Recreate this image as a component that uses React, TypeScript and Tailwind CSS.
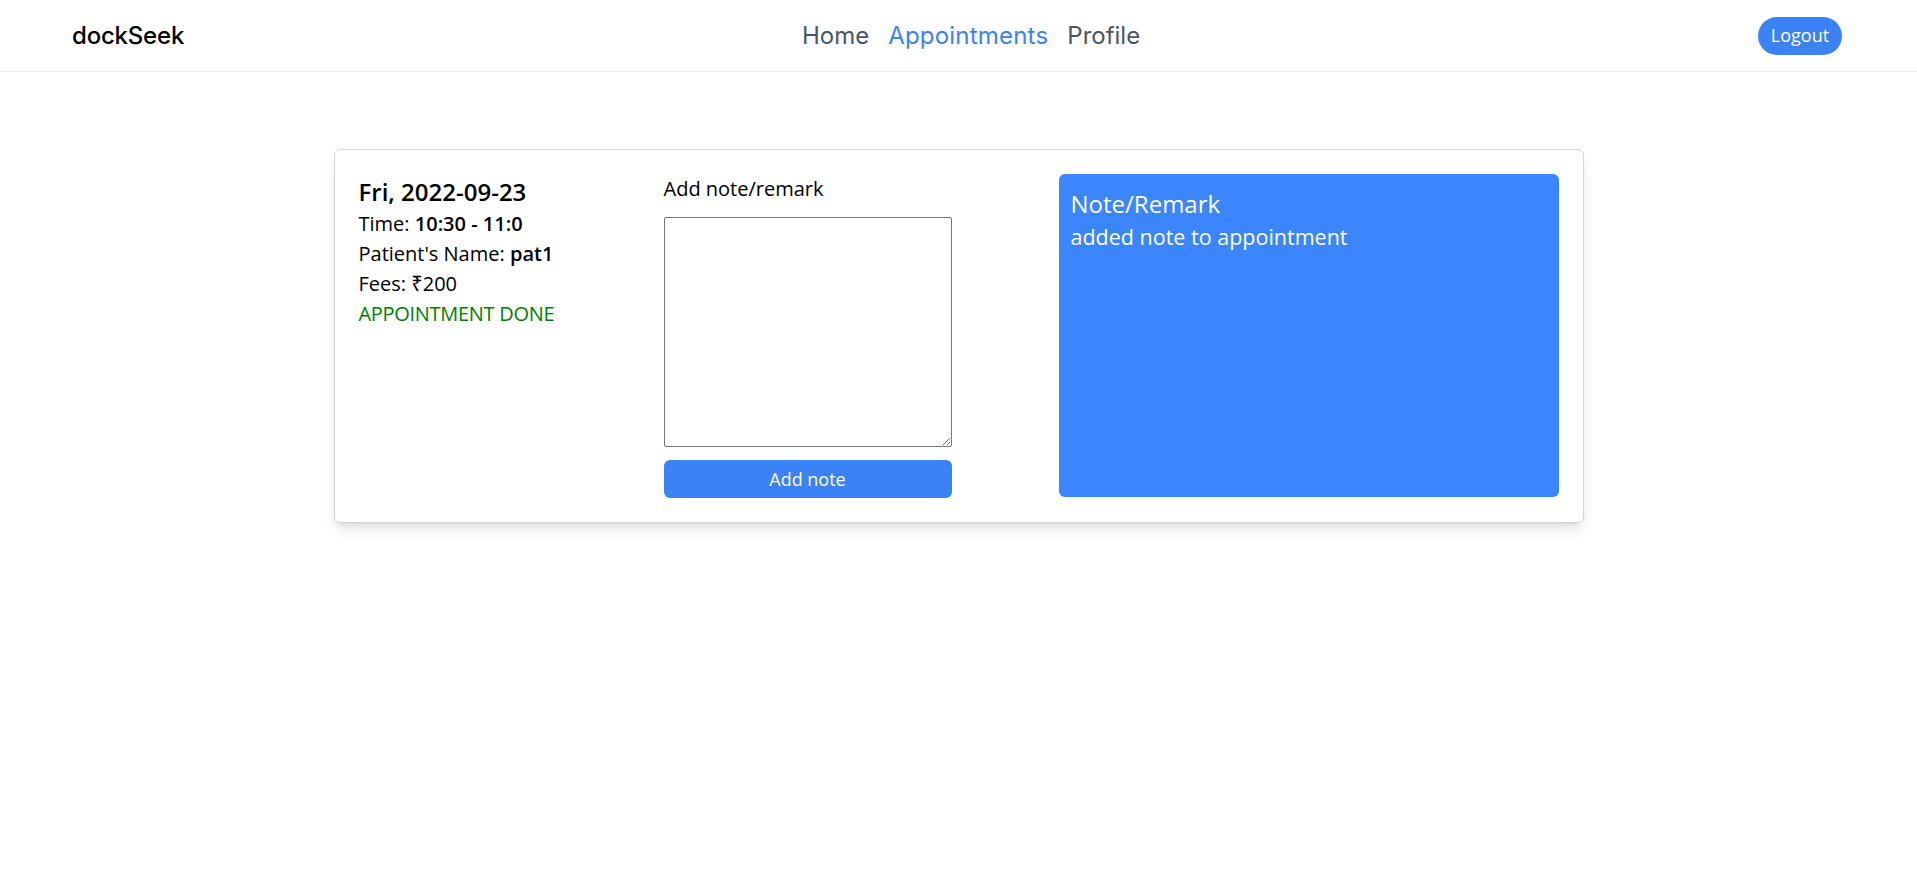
import { useState } from "react";

const Navbar: React.FC = () => {
  return (
    <div className="h-[72px] border-b border-[#ececec] bg-white flex items-center justify-between pl-[72px] pr-[75px]">
      <div className="text-[24px] font-medium text-black font-['Inter',sans-serif] tracking-[-0.2px]">
        dockSeek
      </div>
      <div className="flex items-center gap-[19px] text-[24px] font-['Inter',sans-serif] text-[#4b5563]">
        <span className="cursor-pointer">Home</span>
        <span className="cursor-pointer text-[#3b82f6] tracking-[0.2px]">Appointments</span>
        <span className="cursor-pointer">Profile</span>
      </div>
      <button className="w-[84px] h-[38px] rounded-full bg-[#3b82f6] text-white text-[18px] flex items-center justify-center">
        Logout
      </button>
    </div>
  );
};

const AppointmentCard: React.FC = () => {
  const [note, setNote] = useState("");

  return (
    <div className="w-[1250px] mx-auto mt-[77px] border border-[#d4d4d4] rounded-md bg-white shadow-lg p-6 flex">
      <div className="w-[305px] shrink-0 text-black">
        <div className="text-[24px] leading-[35px] font-semibold">Fri, 2022-09-23</div>
        <div className="text-[20px] leading-[30px]">
          Time: <span className="font-semibold">10:30 - 11:0</span>
        </div>
        <div className="text-[20px] leading-[30px]">
          Patient's Name: <span className="font-semibold">pat1</span>
        </div>
        <div className="text-[20px] leading-[30px]">Fees: ₹200</div>
        <div className="text-[20px] leading-[30px] text-[#008000] tracking-[-0.3px]">APPOINTMENT DONE</div>
      </div>

      <div className="w-[288px] shrink-0 flex flex-col">
        <div className="text-[20px] leading-[30px] text-black">Add note/remark</div>
        <textarea
          className="mt-[13px] h-[230px] w-full border border-[#767676] rounded-[2px] bg-white p-1 text-[16px] outline-none"
          value={note}
          onChange={(e) => setNote(e.target.value)}
        />
        <button className="mt-[13px] h-[38px] w-full rounded-md bg-[#3b82f6] text-white text-[18px]">
          Add note
        </button>
      </div>

      <div className="ml-auto w-[500px] h-[323px] rounded-md bg-[#3b86fe] text-white p-3">
        <div className="text-[24px] leading-[36px]">Note/Remark</div>
        <div className="text-[21.5px] leading-[30px]">added note to appointment</div>
      </div>
    </div>
  );
};

export default function App() {
  return (
    <div className="min-h-screen bg-white font-['Open_Sans','Noto_Sans',sans-serif]">
      <Navbar />
      <AppointmentCard />
    </div>
  );
}
